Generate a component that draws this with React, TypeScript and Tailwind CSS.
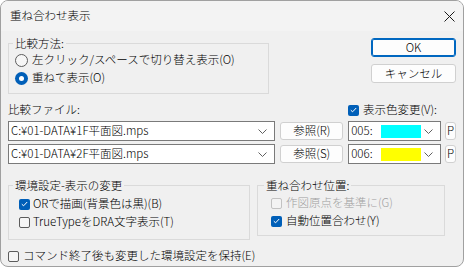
import React from "react";

const Radio = ({ checked }: { checked?: boolean }) =>
  checked ? (
    <span className="w-[13px] h-[13px] rounded-full bg-[#005fb8] flex items-center justify-center shrink-0">
      <span className="w-[5px] h-[5px] rounded-full bg-white" />
    </span>
  ) : (
    <span className="w-[13px] h-[13px] rounded-full border border-[#5c5c5c] bg-[#f6f6f6] shrink-0" />
  );

const Check = ({ checked, disabled }: { checked?: boolean; disabled?: boolean }) =>
  checked ? (
    <span className="w-[11px] h-[11px] rounded-[2px] bg-[#005fb8] flex items-center justify-center shrink-0">
      <svg width="7" height="6" viewBox="0 0 7 6">
        <path d="M0.8 3.2 L2.6 4.8 L6.2 1" stroke="white" strokeWidth="1" fill="none" />
      </svg>
    </span>
  ) : (
    <span
      className={
        "w-[11px] h-[11px] rounded-[2px] border shrink-0 " +
        (disabled ? "border-[#c2c2c2] bg-[#f3f3f3]" : "border-[#5c5c5c] bg-[#f6f6f6]")
      }
    />
  );

const Chevron = () => (
  <svg width="9" height="5" viewBox="0 0 9 5" className="shrink-0">
    <path d="M0.5 0.5 L4.5 4.5 L8.5 0.5" stroke="#606060" strokeWidth="1" fill="none" />
  </svg>
);

const Btn = ({ children, def, cls }: { children: React.ReactNode; def?: boolean; cls: string }) => (
  <div
    className={
      "flex items-center justify-center rounded-[3px] bg-[#fdfdfd] leading-none " +
      (def ? "border border-[#0067c0] shadow-[inset_0_0_0_1px_#0067c0] " : "border border-[#d0d0d0] ") +
      cls
    }
  >
    {children}
  </div>
);

export default function App() {
  return (
    <div className="w-[466px] h-[268px] bg-white font-['Noto_Sans_CJK_JP',sans-serif] font-light text-[11.5px] text-black">
      <div className="w-[464px] h-[267px] rounded-[8px] border border-[#a0a0a0] bg-[#f0f0f0] overflow-hidden flex flex-col">
        {/* title bar */}
        <div className="h-[30px] bg-[#f3f3f3] flex items-center justify-between pl-[9px] pr-[8px] shrink-0">
          <span className="leading-none">重ね合わせ表示</span>
          <svg width="11" height="11" viewBox="0 0 11 11">
            <path d="M0.5 0.5 L10.5 10.5 M10.5 0.5 L0.5 10.5" stroke="#1a1a1a" strokeWidth="1" />
          </svg>
        </div>

        <div className="flex-1 pl-[7px] pr-[7px] flex flex-col">
          {/* Row A */}
          <div className="flex mt-[4px]">
            <fieldset className="w-[261px] border border-[#dadada] pb-[6px]">
              <legend className="ml-[4px] px-[2px] leading-[16px]">比較方法:</legend>
              <div className="flex items-center h-[18px] pl-[6px] gap-[4px]">
                <Radio />
                <span className="leading-none">左クリック/スペースで切り替え表示(O)</span>
              </div>
              <div className="flex items-center h-[18px] pl-[6px] gap-[4px]">
                <Radio checked />
                <span className="leading-none">重ねて表示(O)</span>
              </div>
            </fieldset>
            <div className="ml-auto flex flex-col gap-[7px] mt-[3px]">
              <Btn def cls="w-[85px] h-[19px]">OK</Btn>
              <Btn cls="w-[85px] h-[19px]">キャンセル</Btn>
            </div>
          </div>

          {/* Row B */}
          <div className="flex items-center h-[16px] mt-[8px]">
            <span className="leading-none w-[340px]">比較ファイル:</span>
            <div className="flex items-center gap-[4px]">
              <Check checked />
              <span className="leading-none">表示色変更(V):</span>
            </div>
          </div>

          {/* Row C */}
          <div className="flex flex-col gap-[3px] mt-[3px]">
            {[
              { path: "C:¥01-DATA¥1F平面図.mps", btn: "参照(R)", num: "005:", color: "bg-[#00ffff]" },
              { path: "C:¥01-DATA¥2F平面図.mps", btn: "参照(S)", num: "006:", color: "bg-[#ffff00]" },
            ].map((r) => (
              <div key={r.btn} className="flex items-center h-[20px]">
                <div className="w-[268px] h-[20px] bg-white border border-[#7a7a7a] flex items-center pl-[2px] pr-[7px]">
                  <span className="leading-none flex-1">{r.path}</span>
                  <Chevron />
                </div>
                <Btn cls="ml-[5px] w-[63px] h-[18px]">{r.btn}</Btn>
                <div className="ml-[5px] w-[93px] h-[20px] bg-white border border-[#7a7a7a] flex items-center pl-[2px] pr-[7px]">
                  <span className="leading-none w-[30px]">{r.num}</span>
                  <span className={"w-[40px] h-[13px] " + r.color} />
                  <span className="flex-1" />
                  <Chevron />
                </div>
                <Btn cls="ml-[4px] w-[11px] h-[18px]">P</Btn>
              </div>
            ))}
          </div>

          {/* Row D */}
          <div className="flex items-start mt-[13px]">
            <fieldset className="w-[242px] border border-[#dadada] pt-[2px] pb-[8px]">
              <legend className="ml-[4px] px-[2px] leading-[16px]">環境設定-表示の変更</legend>
              <div className="flex items-center h-[18px] pl-[10px] gap-[3px]">
                <Check checked />
                <span className="leading-none">ORで描画(背景色は黒)(B)</span>
              </div>
              <div className="flex items-center h-[18px] pl-[10px] gap-[3px]">
                <Check />
                <span className="leading-none">TrueTypeをDRA文字表示(T)</span>
              </div>
            </fieldset>
            <fieldset className="ml-[7px] w-[188px] border border-[#dadada] pt-[1px] pb-[5px]">
              <legend className="ml-[6px] px-[2px] leading-[16px]">重ね合わせ位置:</legend>
              <div className="flex items-center h-[18px] pl-[13px] gap-[4px] text-[#a0a0a0]">
                <Check disabled />
                <span className="leading-none">作図原点を基準に(G)</span>
              </div>
              <div className="flex items-center h-[18px] pl-[13px] gap-[4px]">
                <Check checked />
                <span className="leading-none">自動位置合わせ(Y)</span>
              </div>
            </fieldset>
          </div>

          {/* Row E */}
          <div className="flex items-center h-[16px] mt-[8px] gap-[4px]">
            <Check />
            <span className="leading-none">コマンド終了後も変更した環境設定を保持(E)</span>
          </div>
        </div>
      </div>
    </div>
  );
}
